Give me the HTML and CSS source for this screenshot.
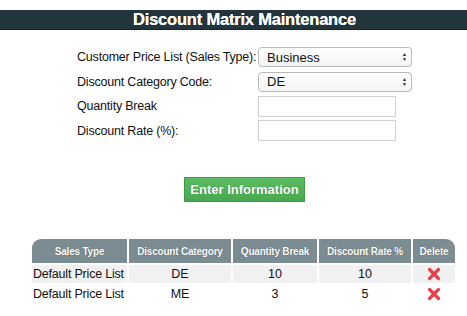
FILE: index.html
```html
<!DOCTYPE html>
<html lang="en-US">
<head>
  <meta charset="UTF-8">
  <title>Discount Matrix Maintenance</title>
  <link rel="stylesheet" href="styles.css">
</head>
<body>
  <div class="page">
    <h1 class="title-bar">Discount Matrix Maintenance</h1>

    <form class="matrix-form">
      <div class="form-row">
        <label>Customer Price List (Sales Type):</label>
        <div class="fake-select"><span>Business</span><span class="arrows">&#9650;<br>&#9660;</span></div>
      </div>
      <div class="form-row">
        <label>Discount Category Code:</label>
        <div class="fake-select"><span>DE</span><span class="arrows">&#9650;<br>&#9660;</span></div>
      </div>
      <div class="form-row">
        <label>Quantity Break</label>
        <input type="text" class="text-input">
      </div>
      <div class="form-row">
        <label>Discount Rate (%):</label>
        <input type="text" class="text-input">
      </div>
      <div class="button-row">
        <button type="button" class="enter-btn">Enter Information</button>
      </div>
    </form>

    <table class="matrix-table">
      <thead>
        <tr>
          <th class="col-type">Sales Type</th>
          <th class="col-cat">Discount Category</th>
          <th class="col-qty">Quantity Break</th>
          <th class="col-rate">Discount Rate %</th>
          <th class="col-del">Delete</th>
        </tr>
      </thead>
      <tbody>
        <tr class="odd">
          <td class="left">Default Price List</td>
          <td>DE</td>
          <td>10</td>
          <td>10</td>
          <td><svg class="del-icon" viewBox="0 0 14 14"><path d="M2.5 2.5 L11.5 11.5 M11.5 2.5 L2.5 11.5"/></svg></td>
        </tr>
        <tr>
          <td class="left">Default Price List</td>
          <td>ME</td>
          <td>3</td>
          <td>5</td>
          <td><svg class="del-icon" viewBox="0 0 14 14"><path d="M2.5 2.5 L11.5 11.5 M11.5 2.5 L2.5 11.5"/></svg></td>
        </tr>
      </tbody>
    </table>
  </div>
</body>
</html>
```

FILE: styles.css
```css
html {
  overflow: hidden;
}
body {
  margin: 0;
  padding: 0;
  font-family: 'Liberation Sans', Arial, sans-serif;
  font-size: 12.5px;
  color: #111;
  background-color: #fff;
}
.page {
  width: 489px;
  padding-top: 10px;
}
.title-bar {
  margin: 0;
  height: 19px;
  line-height: 19px;
  background-color: #22353d;
  border-bottom: 1px solid #18262c;
  color: #fff;
  text-align: center;
  font-size: 16.5px;
  font-weight: bold;
  letter-spacing: -0.2px;
  text-shadow: 0 0 0.5px #fff;
}
.matrix-form {
  margin: 17px 0 0 77px;
}
.form-row {
  display: flex;
  align-items: center;
  height: 20px;
  margin-bottom: 4.5px;
}
.form-row label {
  width: 181px;
  flex-shrink: 0;
  white-space: nowrap;
  letter-spacing: -0.2px;
}
.fake-select {
  box-sizing: border-box;
  width: 154px;
  height: 20px;
  border: 1px solid #b9b9b9;
  border-radius: 4px;
  background: linear-gradient(#fff, #f4f4f4);
  display: flex;
  justify-content: space-between;
  align-items: center;
  padding: 0 4px 0 8px;
  font-size: 13px;
}
.arrows {
  font-size: 5px;
  line-height: 5px;
  color: #222;
  text-align: center;
}
.text-input {
  box-sizing: border-box;
  width: 138px;
  height: 21px;
  margin: 0;
  border: 1px solid #cfcfcf;
  background: #fff;
}
.form-row:nth-child(3) {
  margin-top: 4px;
}
.button-row {
  padding: 32px 0 0 107px;
}
.enter-btn {
  width: 121px;
  height: 25px;
  border: 1px solid #3e9a47;
  background: linear-gradient(#5cbc63, #47a94f);
  color: #fff;
  font-family: 'Liberation Sans', Arial, sans-serif;
  font-size: 13px;
  font-weight: bold;
  text-shadow: 0 0 1px #2d6a32;
  padding: 0;
  cursor: pointer;
}
.matrix-table {
  margin: 35px 0 0 30px;
  border-spacing: 2px;
  table-layout: fixed;
  font-size: 12.5px;
}
.matrix-table th {
  background-color: #7b8c93;
  color: #fff;
  font-size: 10px;
  font-weight: bold;
  height: 24px;
  padding: 0;
  white-space: nowrap;
  letter-spacing: -0.2px;
  text-shadow: 0 0 1px #444;
}
.matrix-table th.col-type {
  width: 95px;
  border-top-left-radius: 9px;
}
.matrix-table th.col-cat {
  width: 102px;
}
.matrix-table th.col-qty {
  width: 84px;
}
.matrix-table th.col-rate {
  width: 92px;
}
.matrix-table th.col-del {
  width: 42px;
  border-top-right-radius: 9px;
}
.matrix-table td {
  height: 18px;
  padding: 0;
  text-align: center;
  white-space: nowrap;
}
.matrix-table td.left {
  text-align: left;
  padding-left: 1px;
  letter-spacing: -0.2px;
}
.matrix-table tr.odd td {
  background-color: #f1f1f1;
}
.del-icon {
  width: 14px;
  height: 14px;
  vertical-align: middle;
}
.del-icon path {
  stroke: #ec3f4c;
  stroke-width: 3.2;
  stroke-linecap: round;
  fill: none;
}
```
